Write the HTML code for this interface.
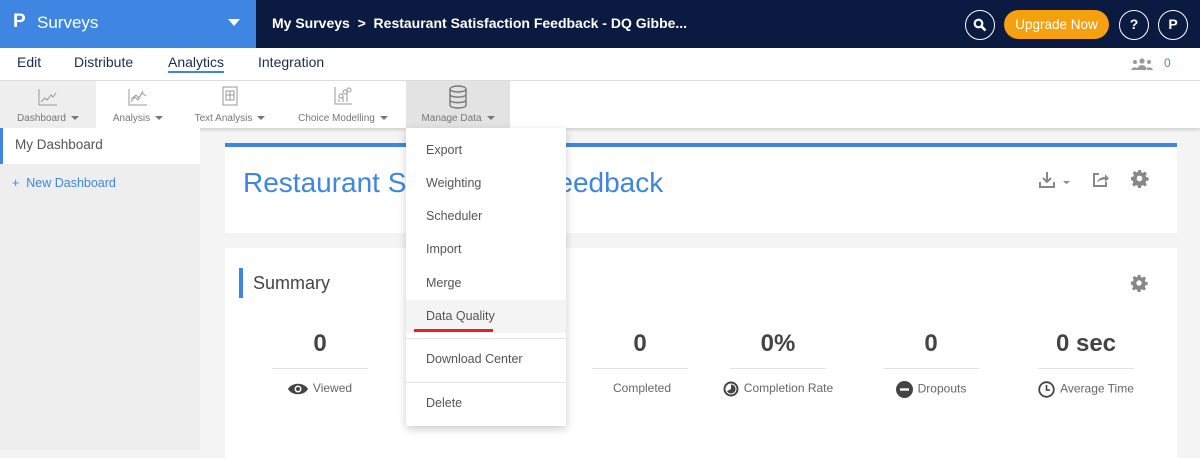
<!DOCTYPE html>
<html><head><style>
*{margin:0;padding:0;box-sizing:border-box}
body{width:1200px;height:450px;overflow:hidden;font-family:"Liberation Sans",sans-serif;background:#f4f4f4;position:relative;font-size:13px;color:#555}
.abs{position:absolute}
.top{left:0;top:0;width:1200px;height:48px;background:#0b1a41}
.brand{left:0;top:0;width:256px;height:48px;background:#3e86e2;color:#fff;font-size:17px}
.tabs{left:0;top:48px;width:1200px;height:33px;background:#fff;border-bottom:1px solid #ddd}
.tabs span{position:absolute;top:6px;font-size:14px;color:#1c2b4d}
.tool{left:0;top:81px;width:1200px;height:47px;background:#fff;box-shadow:0 2px 3px rgba(0,0,0,.15)}
.ti{position:absolute;top:0;height:47px;font-size:10px;color:#777;text-align:center}
.ti .l{position:absolute;bottom:4px;left:0;right:0}
.car{display:inline-block;border-left:4px solid transparent;border-right:4px solid transparent;border-top:4px solid #777;margin-left:5px;vertical-align:middle}
.side{left:0;top:128px;width:200px;height:322px;background:#eee}
.card{background:#fff}
.menu{left:406px;top:128px;width:160px;height:298px;background:#fff;box-shadow:0 3px 8px rgba(0,0,0,.2)}
.menu div{position:absolute;left:20px;font-size:12.5px;color:#555}
.num{position:absolute;font-size:24px;font-weight:bold;color:#444;text-align:center;width:140px}
.lbl{position:absolute;font-size:12px;color:#666;text-align:center;width:160px}
.lbl svg{vertical-align:middle;margin-right:5px}
.hr{position:absolute;height:1px;background:#e2e2e2;width:96px}
.circ{position:absolute;width:30px;height:30px;border:1.5px solid #fff;border-radius:50%;color:#fff;font-weight:bold;text-align:center;line-height:27px;font-size:14px}
</style></head><body>
<svg width="0" height="0" style="position:absolute"><defs><symbol id="gear" viewBox="0 0 20 20"><path fill="#888" fill-rule="evenodd" d="M8.5 1h3l.5 2.5 1.6.7 2.1-1.4 2.1 2.1-1.4 2.1.7 1.6 2.5.5v3l-2.5.5-.7 1.6 1.4 2.1-2.1 2.1-2.1-1.4-1.6.7-.5 2.5h-3l-.5-2.5-1.6-.7-2.1 1.4-2.1-2.1 1.4-2.1-.7-1.6L1 11.5v-3l2.5-.5.7-1.6-1.4-2.1 2.1-2.1 2.1 1.4 1.6-.7zM10 7a3 3 0 100 6 3 3 0 000-6z"/></symbol></defs></svg>
<div class="abs top"></div>
<div class="abs brand"><span class="abs" style="left:13px;top:11px;font-weight:bold;font-size:19px">P</span><span class="abs" style="left:37px;top:13px">Surveys</span><span class="abs" style="left:228px;top:19px;border-left:6px solid transparent;border-right:6px solid transparent;border-top:7px solid #fff"></span></div>
<div class="abs" style="left:272px;top:15px;color:#fff;font-size:14px;font-weight:bold">My Surveys &nbsp;&gt;&nbsp; Restaurant Satisfaction Feedback - DQ Gibbe...</div>
<div class="circ" style="left:965px;top:10px"><svg width="14" height="14" viewBox="0 0 14 14" style="margin-top:7px"><circle cx="5.5" cy="5.5" r="3.8" stroke="#fff" stroke-width="2.2" fill="none"/><path d="M8.3 8.3L12.5 12.5" stroke="#fff" stroke-width="2.6"/></svg></div>
<div class="abs" style="left:1004px;top:10px;width:105px;height:29px;background:#f5a00f;border-radius:15px;color:#fff;font-size:13.5px;text-align:center;line-height:29px">Upgrade Now</div>
<div class="circ" style="left:1119px;top:10px">?</div>
<div class="circ" style="left:1158px;top:10px">P</div>
<div class="abs tabs"><span style="left:17px">Edit</span><span style="left:74px">Distribute</span><span style="left:168px;border-bottom:2px solid #3e86e2;line-height:17px">Analytics</span><span style="left:258px">Integration</span>
<svg class="abs" style="left:1131px;top:10px" width="22" height="12" viewBox="0 0 22 12"><circle cx="11" cy="3" r="2.6" fill="#999"/><circle cx="4" cy="4" r="2" fill="#999"/><circle cx="18" cy="4" r="2" fill="#999"/><path d="M6 12a5 5 0 0110 0z M0 12a4 4 0 017-1v1z M22 12a4 4 0 00-7-1v1z" fill="#999"/></svg>
<span style="left:1164px;top:8px;color:#3e86e2;font-size:12px">0</span></div>
<div class="abs tool">
<div class="ti" style="left:0;width:96px;background:#eee"><svg width="22" height="20" style="margin-top:6px"><path d="M2 2V18H20M4 15L8 11 10 13 14 8 16 10 19 6" stroke="#999" fill="none"/></svg><div class="l">Dashboard<span class="car"></span></div></div>
<div class="ti" style="left:96px;width:84px"><svg width="22" height="20" style="margin-top:6px"><path d="M2 2V18H20M4 15L8 10 11 13 15 6 19 9M4 12L9 8 12 11 16 4" stroke="#999" fill="none"/></svg><div class="l">Analysis<span class="car"></span></div></div>
<div class="ti" style="left:180px;width:100px"><svg width="20" height="22" style="margin-top:4px"><rect x="3" y="2" width="14" height="18" stroke="#999" fill="none"/><rect x="6" y="6" width="8" height="9" stroke="#999" fill="none"/><path d="M10 6V15M6 10H14" stroke="#999"/></svg><div class="l">Text Analysis<span class="car"></span></div></div>
<div class="ti" style="left:280px;width:126px"><svg width="22" height="22" style="margin-top:4px"><path d="M3 2V19H20M7 17V14M11 17V11M15 17V8" stroke="#999" fill="none"/><circle cx="9" cy="11" r="2" stroke="#999" fill="none"/><circle cx="13" cy="7" r="2" stroke="#999" fill="none"/><circle cx="17" cy="5" r="2" stroke="#999" fill="none"/></svg><div class="l">Choice Modelling<span class="car"></span></div></div>
<div class="ti" style="left:406px;width:104px;background:#e3e3e3"><svg width="20" height="26" style="margin-top:3px"><ellipse cx="10" cy="5" rx="8" ry="3" stroke="#777" stroke-width="1.4" fill="none"/><path d="M2 5V21C2 25 18 25 18 21V5M2 10.5C2 14 18 14 18 10.5M2 16C2 19.5 18 19.5 18 16" stroke="#777" stroke-width="1.4" fill="none"/></svg><div class="l">Manage Data<span class="car"></span></div></div>
</div>
<div class="abs side"><div style="background:#fff;height:36px;border-left:3px solid #3e86e2;padding:9px 12px;font-size:13.5px;color:#555">My Dashboard</div><div style="padding:12px;color:#3e86e2;font-size:12.5px">+ &nbsp;New Dashboard</div></div>
<div class="abs card" style="left:225px;top:143px;width:952px;height:90px;border-top:4px solid #3e86e2"></div>
<div class="abs" style="left:243px;top:167px;font-size:28px;color:#3e86e2">Restaurant Satisfaction Feedback</div>
<svg class="abs" style="left:1038px;top:170px" width="34" height="20"><path d="M9 2V12M5 8L9 12 13 8M2 12V17H16V12" stroke="#888" stroke-width="2" fill="none"/><path d="M25 11H32L28.5 14z" fill="#888"/></svg>
<svg class="abs" style="left:1092px;top:171px" width="18" height="17"><path d="M7 3H2V15H14V11" stroke="#888" stroke-width="2" fill="none"/><path d="M5 12C6 7 10 6 13 6V3L17 7.5 13 11V8.5C10 8.5 7 9 5 12z" fill="#888"/></svg>
<svg class="abs" style="left:1130px;top:169px" width="19" height="19"><use href="#gear"/></svg>
<div class="abs card" style="left:225px;top:248px;width:952px;height:210px"></div>
<div class="abs" style="left:239px;top:268px;width:4px;height:30px;background:#3e86e2"></div>
<div class="abs" style="left:253px;top:273px;font-size:18px;color:#444">Summary</div>
<svg class="abs" style="left:1130px;top:274px" width="18" height="18"><use href="#gear"/></svg>
<div class="num" style="left:250px;top:330px">0</div><div class="hr" style="left:272px;top:368px"></div>
<div class="lbl" style="left:240px;top:381px"><svg width="20" height="12" viewBox="0 0 20 12"><path d="M0 6C4 -1 16 -1 20 6 16 13 4 13 0 6z" fill="#444"/><circle cx="10" cy="6" r="3.5" fill="#fff"/><circle cx="10" cy="6" r="2" fill="#444"/></svg>Viewed</div>
<div class="num" style="left:570px;top:330px">0</div><div class="hr" style="left:592px;top:368px"></div>
<div class="lbl" style="left:562px;top:381px">Completed</div>
<div class="num" style="left:708px;top:330px">0%</div><div class="hr" style="left:730px;top:368px"></div>
<div class="lbl" style="left:698px;top:381px"><svg width="16" height="16"><circle cx="8" cy="8" r="6.5" stroke="#444" stroke-width="2" fill="none"/><path d="M8 3.5A4.5 4.5 0 1 1 4 10L8 8z" fill="#444"/></svg>Completion Rate</div>
<div class="num" style="left:861px;top:330px">0</div><div class="hr" style="left:883px;top:368px"></div>
<div class="lbl" style="left:851px;top:381px"><svg width="17" height="17"><circle cx="8.5" cy="8.5" r="8.5" fill="#444"/><rect x="4" y="7.3" width="9" height="2.4" fill="#fff"/></svg>Dropouts</div>
<div class="num" style="left:1016px;top:330px">0 sec</div><div class="hr" style="left:1038px;top:368px"></div>
<div class="lbl" style="left:1006px;top:381px"><svg width="17" height="17"><circle cx="8.5" cy="8.5" r="7.3" stroke="#444" stroke-width="1.8" fill="none"/><path d="M8.5 4V9H12" stroke="#444" stroke-width="1.6" fill="none"/></svg>Average Time</div>
<div class="abs menu">
<div style="top:15px">Export</div><div style="top:48px">Weighting</div><div style="top:81px">Scheduler</div><div style="top:114px">Import</div><div style="top:148px">Merge</div>
<div style="left:0;top:172px;width:160px;height:33px;background:#f4f4f4"></div>
<div style="top:181px">Data Quality</div>
<div style="left:8px;top:201px;width:79px;height:3px;background:#e8202a"></div>
<div style="left:0;top:210px;width:160px;height:1px;background:#e4e4e4"></div>
<div style="top:224px">Download Center</div>
<div style="left:0;top:254px;width:160px;height:1px;background:#e4e4e4"></div>
<div style="top:268px">Delete</div>
</div>
</body></html>
